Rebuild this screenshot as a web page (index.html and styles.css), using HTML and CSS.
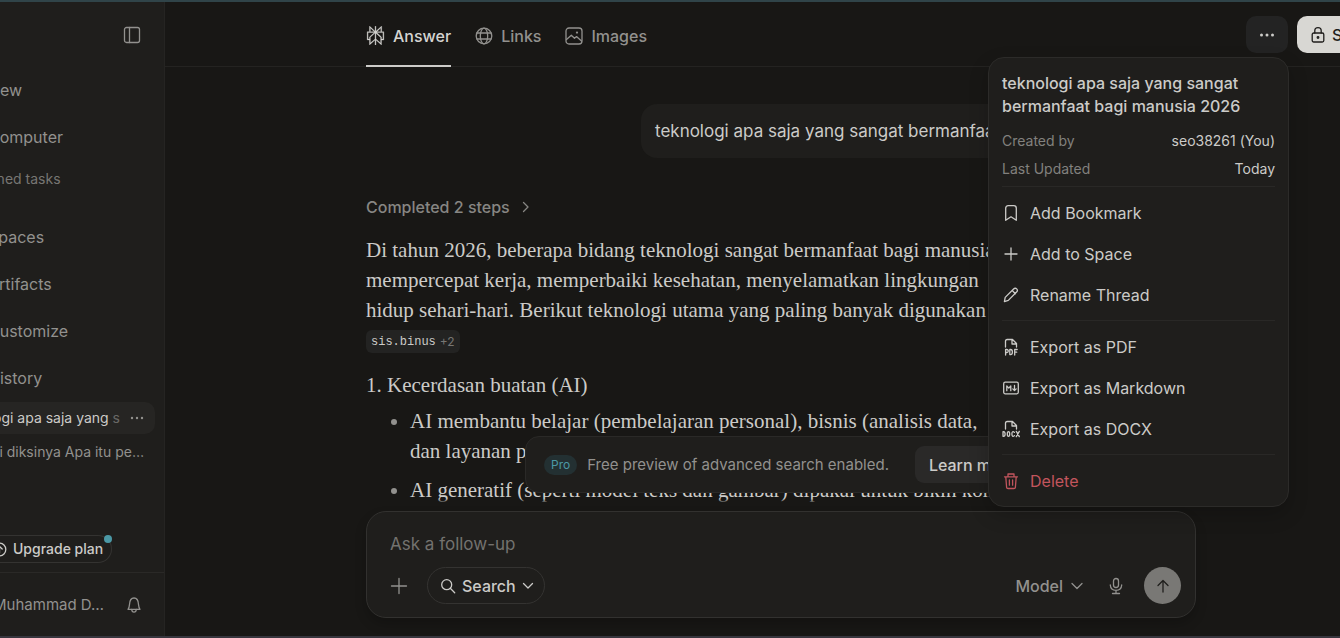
FILE: index.html
```html
<!DOCTYPE html>
<html lang="id">
<head>
<meta charset="utf-8">
<meta name="viewport" content="width=device-width, initial-scale=1">
<title>teknologi apa saja yang sangat bermanfaat bagi manusia 2026</title>
<link rel="stylesheet" href="styles.css">
</head>
<body>
<div class="app">
  <aside class="sidebar">
    <div class="sidebar-top">
      <button class="icon-button" aria-label="Toggle sidebar">
        <svg class="icon" width="18" height="18" viewBox="0 0 18 18"><rect x="1.5" y="1.5" width="15" height="15" rx="2"/><path d="M6.500 1.500v15"/></svg>
      </button>
    </div>
    <nav class="nav">
      <a class="nav-link" href="#">New</a>
      <a class="nav-link" href="#">Computer</a>
      <a class="nav-sub" href="#">Pinned tasks</a>
      <a class="nav-link" href="#">Spaces</a>
      <a class="nav-link" href="#">Artifacts</a>
      <a class="nav-link" href="#">Customize</a>
      <a class="nav-link" href="#">History</a>
    </nav>
    <div class="recent">
      <div class="recent-row recent-active">
        <a class="recent-link" href="#">teknologi apa saja yang <span class="faded">s</span></a>
        <button class="icon-button recent-more" aria-label="Thread options">
          <svg class="dots" width="14" height="4" viewBox="0 0 14 4"><circle cx="2" cy="2" r="1.2"/><circle cx="7" cy="2" r="1.2"/><circle cx="12" cy="2" r="1.2"/></svg>
        </button>
      </div>
      <div class="recent-row"><a class="recent-link" href="#">Perbaiki diksinya Apa itu pe…</a></div>
    </div>
    <div class="upgrade">
      <button class="upgrade-button">
        <svg class="icon" width="15" height="15" viewBox="0 0 15 15"><circle cx="7.5" cy="7.5" r="6.300"/><path d="M7.500 11V4.500M4.800 7l2.700-2.700L10.200 7"/></svg>
        Upgrade plan
      </button>
      <span class="upgrade-dot"></span>
    </div>
    <div class="account">
      <a class="account-name" href="#">Muhammad D…</a>
      <button class="icon-button" aria-label="Notifications">
        <svg class="icon" width="16" height="18" viewBox="0 0 16 18"><path d="M2 13.300h12c-1-1.200-1.300-2.400-1.500-4.800C12.300 4.600 10.600 2 8 2S3.700 4.600 3.500 8.500C3.300 10.900 3 12.100 2 13.300z"/><path d="M5.700 13.500c.2 1.800 1.100 2.700 2.300 2.700s2.100-.9 2.300-2.700"/></svg>
      </button>
    </div>
  </aside>

  <main class="main">
    <header class="header">
      <nav class="tabs">
        <a class="tab tab-active" href="#">
          <svg class="logo" width="19" height="19" viewBox="0 0 24 24"><path d="M19.785 0v7.272H22.500V17.620h-2.935V24l-7.037-6.194v6.145h-1.091v-6.152L4.392 24v-6.465H1.500V7.188h2.884V0l7.053 6.494V.19h1.090v6.490L19.786 0zm-7.257 9.044v7.319l5.946 5.234V14.440l-5.946-5.397zm-1.099-.08l-5.946 5.398v7.235l5.946-5.234V8.965zm8.136 7.580h1.844V8.349H13.460l6.105 5.540v2.655zm-8.982-8.280H2.590v8.195h1.800v-2.576l6.192-5.620zM5.475 2.476v4.710h5.115l-5.115-4.710zm13.219 0l-5.115 4.710h5.115v-4.710z"/></svg>
          Answer
        </a>
        <a class="tab" href="#">
          <svg class="icon" width="18" height="18" viewBox="0 0 18 18"><circle cx="9" cy="9" r="7.800"/><ellipse cx="9" cy="9" rx="3.700" ry="7.800"/><path d="M2 6h14M2 12h14"/></svg>
          Links
        </a>
        <a class="tab" href="#">
          <svg class="icon" width="18" height="18" viewBox="0 0 18 18"><rect x="1" y="1" width="16" height="16" rx="3"/><path d="m1.500 12.500 4.800-4.200 3.200 3 2-1.700 5 4.400"/><circle cx="12" cy="5.600" r=".5"/></svg>
          Images
        </a>
      </nav>
      <div class="actions">
        <div class="menu-anchor">
          <button class="more-button" aria-label="More" aria-expanded="true">
            <svg class="dots" width="16" height="4" viewBox="0 0 16 4"><circle cx="2.500" cy="2" r="1.500"/><circle cx="8" cy="2" r="1.500"/><circle cx="13.500" cy="2" r="1.500"/></svg>
          </button>
          <div class="menu">
            <h2 class="menu-title">teknologi apa saja yang sangat bermanfaat bagi manusia 2026</h2>
            <dl class="meta">
              <div class="meta-row"><dt>Created by</dt><dd>seo38261 (You)</dd></div>
              <div class="meta-row"><dt>Last Updated</dt><dd>Today</dd></div>
            </dl>
            <div class="menu-group">
              <button class="menu-item"><svg class="icon" width="18" height="18" viewBox="0 0 18 18"><path d="M3.700 16.300V4.200c0-1.600.9-2.500 2.500-2.500h5.600c1.600 0 2.500.9 2.500 2.500v12.100L9 12.800z"/></svg>Add Bookmark</button>
              <button class="menu-item"><svg class="icon" width="18" height="18" viewBox="0 0 18 18"><path d="M9 3v12M3 9h12"/></svg>Add to Space</button>
              <button class="menu-item"><svg class="icon" width="18" height="18" viewBox="0 0 18 18"><path d="m2.400 15.600.8-4.200 8.400-8.400c1-1 2.200-1 3.100-.1s.9 2.100-.1 3.100L6.300 14.400zM10.200 4.500l3.200 3.200"/></svg>Rename Thread</button>
            </div>
            <div class="menu-group">
              <button class="menu-item"><svg class="icon" width="18" height="18" viewBox="0 0 18 18"><path d="M3.500 9V3.200c0-1.100.5-1.700 1.700-1.700h5.300l4 4V9M10 1.800V6h4.200"/><path d="M3.600 17v-5.500h1.200a1.500 1.500 0 0 1 0 3H3.600M7.800 11.500h.8c1.200 0 1.800.9 1.800 2.500s-.6 2.600-1.800 2.600h-.8zM12.700 17v-5.500h2.500M12.700 14.200h2"/></svg>Export as PDF</button>
              <button class="menu-item"><svg class="icon" width="18" height="18" viewBox="0 0 18 18"><rect x="1.700" y="3.200" width="14.600" height="11.600" rx="1.500"/><path d="M4.800 11.700V6.900l2 2.200 2-2.200v4.800M12.500 6.500v5M10.800 9.900l1.700 1.700 1.700-1.700"/></svg>Export as Markdown</button>
              <button class="menu-item"><svg class="icon" width="18" height="18" viewBox="0 0 18 18"><path d="M3.500 9V3.200c0-1.100.5-1.700 1.700-1.700h5.300l4 4V9M10 1.800V6h4.200"/><path d="M1 11.700h.6c1 0 1.500.8 1.500 2.300s-.5 2.300-1.500 2.300H1zM6.500 11.600c-.8 0-1.200.8-1.200 2.400s.4 2.400 1.200 2.400 1.200-.8 1.200-2.400-.4-2.400-1.200-2.400zM12.400 12.400c-1.400-1.500-2.500-.6-2.500 1.600s1.100 3.100 2.500 1.600M14.300 11.400l3 5.200M17.300 11.400l-3 5.200"/></svg>Export as DOCX</button>
            </div>
            <div class="menu-group">
              <button class="menu-item menu-danger"><svg class="icon" width="18" height="18" viewBox="0 0 18 18"><path d="M2.500 4.800h13M6 4.500V2h6v2.500M3.800 5l.8 10.300c.1.800.6 1.200 1.400 1.200h6c.8 0 1.300-.4 1.400-1.200L14.200 5M7.400 8v5.200M10.600 8v5.200"/></svg>Delete</button>
            </div>
          </div>
        </div>
        <button class="share-button">
          <svg class="icon" width="14" height="18" viewBox="0 0 14 18"><rect x="1.200" y="7" width="11.600" height="9" rx="1.500"/><path d="M3.800 7V4.800C3.800 2.900 5 1.700 7 1.700s3.200 1.200 3.200 3.100V7"/><circle cx="7" cy="11.500" r=".8"/></svg>
          Share
        </button>
      </div>
    </header>

    <section class="thread">
      <div class="question">teknologi apa saja yang sangat bermanfaat bagi manusia 2026</div>
      <button class="steps">Completed 2 steps
        <svg class="icon" width="8" height="12" viewBox="0 0 8 12"><path d="m1.500 1.500 4.500 4.500-4.500 4.500"/></svg>
      </button>
      <article class="answer">
        <p class="answer-text">Di tahun 2026, beberapa bidang teknologi sangat bermanfaat bagi manusia<br>mempercepat kerja, memperbaiki kesehatan, menyelamatkan lingkungan<br>hidup sehari-hari. Berikut teknologi utama yang paling banyak digunakan</p>
        <a class="source" href="#">sis.binus <span class="source-count">+2</span></a>
        <h3 class="answer-heading">1. Kecerdasan buatan (AI)</h3>
        <ul class="answer-list">
          <li>AI membantu belajar (pembelajaran personal), bisnis (analisis data,<br>dan layanan publik</li>
          <li>AI generatif (seperti model teks dan gambar) dipakai untuk bikin konten</li>
        </ul>
      </article>
    </section>

    <div class="dock">
      <div class="banner">
        <span class="badge">Pro</span>
        <span class="banner-text">Free preview of advanced search enabled.</span>
        <button class="banner-button">Learn more</button>
      </div>
      <form class="composer">
        <input class="composer-input" type="text" placeholder="Ask a follow-up" aria-label="Ask a follow-up">
        <div class="composer-row">
          <button type="button" class="icon-button attach" aria-label="Add">
            <svg class="icon" width="18" height="18" viewBox="0 0 18 18"><path d="M9 1.500v15M1.500 9h15"/></svg>
          </button>
          <button type="button" class="search-button">
            <svg class="icon" width="16" height="16" viewBox="0 0 16 16"><circle cx="6.700" cy="6.700" r="5"/><path d="m10.300 10.300 4.400 4.400"/></svg>
            Search
            <svg class="icon" width="12" height="8" viewBox="0 0 12 8"><path d="M1.500 1.500 6 6l4.500-4.500"/></svg>
          </button>
          <button type="button" class="model-button">Model
            <svg class="icon" width="12" height="8" viewBox="0 0 12 8"><path d="M1 1.500l5 5 5-5"/></svg>
          </button>
          <button type="button" class="icon-button" aria-label="Dictate">
            <svg class="icon" width="16" height="18" viewBox="0 0 16 18"><rect x="5.500" y="1.500" width="5" height="9" rx="2.500"/><path d="M2.300 8c.2 3.200 2.300 5.300 5.700 5.300s5.500-2.100 5.700-5.300M8 13.300v3M4.500 16.500h7"/></svg>
          </button>
          <button type="submit" class="send-button" aria-label="Submit">
            <svg class="icon" width="16" height="16" viewBox="0 0 16 16"><path d="M8 14V2.500M3 7.500l5-5 5 5"/></svg>
          </button>
        </div>
      </form>
    </div>
  </main>
</div>
</body>
</html>
```
FILE: styles.css
```css
* { box-sizing: border-box; }

body {
  margin: 0;
  overflow: hidden;
  background: #181715;
  color: #cccbc8;
  font: 16px/24px Inter, "Liberation Sans", sans-serif;
}

a { color: inherit; text-decoration: none; }

button {
  padding: 0;
  border: 0;
  background: none;
  color: inherit;
  font: inherit;
  white-space: nowrap;
}

.icon {
  flex: none;
  fill: none;
  stroke: currentColor;
  stroke-width: 1.3;
  stroke-linecap: round;
  stroke-linejoin: round;
}

.dots, .logo { flex: none; fill: currentColor; }
.logo { stroke: currentColor; stroke-width: 0.4; }

.app {
  display: grid;
  grid-template-columns: 165px minmax(0, 1fr);
  height: 100vh;
  border-top: 2px solid #304449;
  border-bottom: 2px solid #37363e;
}

/* Sidebar */
.sidebar {
  display: flex;
  flex-direction: column;
  min-height: 0;
  overflow: hidden;
  border-right: 1px solid #252422;
  background: #1f1e1c;
  color: #92918e;
}

.sidebar-top {
  display: flex;
  align-items: center;
  justify-content: flex-end;
  height: 65px;
  padding-right: 23px;
}

.icon-button { display: flex; align-items: center; justify-content: center; }

.nav { display: flex; flex-direction: column; margin-left: -12px; }
.nav-link { line-height: 47px; }
.nav-sub {
  margin: 0 0 18px -12px;
  color: #777673;
  font-size: 14px;
  line-height: 35px;
}

.recent { display: flex; flex-direction: column; gap: 2px; font-size: 14px; }
.recent-row {
  display: flex;
  align-items: center;
  justify-content: flex-end;
  height: 32px;
  margin-right: 9px;
  padding-right: 11px;
  border-radius: 0 10px 10px 0;
  white-space: nowrap;
}
.recent-active { gap: 10px; background: #262523; color: #cccbc8; }
.faded { opacity: 0.4; }
.recent-more { color: #92918e; }

.upgrade { position: relative; align-self: flex-start; margin: auto 0 9px -8px; }
.upgrade-button {
  display: flex;
  align-items: center;
  gap: 6px;
  height: 28px;
  padding: 0 8px 0 0;
  border: 1px solid #343331;
  border-left: 0;
  border-radius: 0 14px 14px 0;
  color: #cccbc8;
  font-size: 14px;
  font-weight: 500;
}
.upgrade-dot {
  position: absolute;
  top: 0;
  right: 0;
  width: 8px;
  height: 8px;
  border-radius: 50%;
  background: #4b98a5;
}

.account {
  display: flex;
  align-items: center;
  justify-content: flex-end;
  gap: 22px;
  height: 64px;
  padding-right: 22px;
  border-top: 1px solid #2a2927;
  font-size: 15px;
  white-space: nowrap;
}

/* Header */
.main { position: relative; display: flex; flex-direction: column; min-height: 0; }

.header {
  display: flex;
  flex: none;
  justify-content: space-between;
  height: 65px;
  padding-left: 201px;
  border-bottom: 1px solid #242321;
}

.tabs { display: flex; gap: 24px; }
.tab {
  display: flex;
  align-items: center;
  gap: 8px;
  height: 65px;
  padding-top: 4px;
  border-bottom: 2px solid transparent;
  color: #92918e;
  font-weight: 500;
}
.tab-active { border-color: #cccbc8; color: #d5d4d1; }

.actions { display: flex; gap: 9px; margin: 14px -52px 0 0; }
.menu-anchor { position: relative; }
.more-button, .share-button {
  display: flex;
  align-items: center;
  height: 37px;
  border-radius: 10px;
}
.more-button { justify-content: center; width: 42px; background: #232323; }
.share-button {
  gap: 7px;
  width: 95px;
  padding-left: 14px;
  background: #d8d7d3;
  color: #1f1e1c;
  font-weight: 500;
}

/* Thread menu */
.menu {
  position: absolute;
  z-index: 3;
  top: 41px;
  right: -1px;
  width: 301px;
  padding: 14px 13px 0;
  border: 1px solid #2c2b29;
  border-radius: 16px;
  background: #1f1e1c;
  box-shadow: 0 8px 20px rgba(0, 0, 0, 0.2);
}
.menu-title { margin: 0 0 9px; font-size: 16px; font-weight: 500; line-height: 23px; }
.meta { margin: 0 0 3px; font-size: 14px; line-height: 28px; }
.meta-row { display: flex; justify-content: space-between; }
.meta dt { color: #82817e; }
.meta dd { margin: 0; }
.menu-group { padding: 5px 0; border-top: 1px solid #292826; }
.menu-item {
  display: flex;
  align-items: center;
  gap: 10px;
  width: 100%;
  height: 41px;
}
.menu-danger { color: #c2555d; }

/* Thread */
.thread {
  display: flex;
  flex: 1;
  flex-direction: column;
  align-items: flex-start;
  width: 100%;
  max-width: 1031px;
  min-height: 0;
  padding: 37px 0 0 201px;
  overflow: hidden;
}
.question {
  flex: none;
  align-self: flex-end;
  width: 555px;
  padding: 15px 14px;
  border-radius: 16px;
  background: #1f1e1c;
  font-size: 17px;
  white-space: nowrap;
}
.steps {
  display: flex;
  align-items: center;
  gap: 12px;
  margin: 37px 0 16px;
  color: #878683;
  font-weight: 500;
}
.answer {
  font: 21px/30px "Liberation Serif", serif;
  white-space: nowrap;
}
.answer-text { margin: 0 0 5px; }
.source {
  display: flex;
  align-items: center;
  gap: 4px;
  width: fit-content;
  height: 23px;
  padding: 0 5px;
  border-radius: 6px;
  background: #232322;
  font: 12px/16px "Liberation Mono", monospace;
}
.source-count { color: #777673; font-family: Inter, sans-serif; }
.answer-heading { margin: 17px 0 6px; font-size: 21px; font-weight: 400; }
.answer-list {
  display: flex;
  flex-direction: column;
  gap: 9px;
  margin: 0;
  padding-left: 44px;
}
.answer-list li::marker { color: #92918e; }

/* Dock */
.dock {
  position: absolute;
  z-index: 2;
  bottom: 0;
  left: 201px;
  display: flex;
  flex-direction: column;
  align-items: center;
  width: calc(100% - 201px);
  max-width: 830px;
  padding-bottom: 18px;
}
/* Fades the thread out between the banner and the composer */
.dock::before {
  content: "";
  order: 1;
  width: 100%;
  height: 18px;
  background: linear-gradient(transparent 30%, #181715 60%);
}
.banner {
  display: flex;
  align-items: center;
  width: 512px;
  height: 57px;
  padding: 0 6px 0 18px;
  border: 1px solid #2a2927;
  border-radius: 14px;
  background: #1f1e1c;
  color: #92918e;
  white-space: nowrap;
}
.badge {
  margin-right: 10px;
  padding: 0 7px;
  border-radius: 10px;
  background: #233032;
  color: #4b98a5;
  font-size: 12px;
  line-height: 20px;
}
.banner-text { font-size: 15px; }
.banner-button {
  height: 37px;
  margin-left: auto;
  padding: 0 14px;
  border-radius: 9px;
  background: #2a2928;
  color: #cccbc8;
  font-weight: 500;
}
.composer {
  order: 2;
  width: 100%;
  margin: 0;
  padding: 17px 14px 13px 23px;
  border: 1px solid #32312f;
  border-radius: 20px;
  background: #1f1e1c;
  box-shadow: 0 6px 12px rgba(0, 0, 0, 0.2);
}
.composer-input {
  display: block;
  width: 100%;
  height: 30px;
  margin-bottom: 8px;
  padding: 0;
  border: 0;
  outline: 0;
  background: none;
  color: #cccbc8;
  font: 17px/30px Inter, sans-serif;
}
.composer-input::placeholder { color: #73726f; opacity: 1; }
.composer-row { display: flex; align-items: center; color: #92918e; }
.attach { margin-right: 19px; }
.search-button {
  display: flex;
  align-items: center;
  gap: 6px;
  height: 37px;
  padding: 0 10px 0 12px;
  border: 1px solid #343331;
  border-radius: 19px;
  color: #cccbc8;
  font-weight: 500;
}
.model-button {
  display: flex;
  align-items: center;
  gap: 8px;
  margin: 0 25px 0 auto;
  font-weight: 500;
}
.send-button {
  display: flex;
  align-items: center;
  justify-content: center;
  width: 37px;
  height: 37px;
  margin-left: 20px;
  border-radius: 50%;
  background: #797875;
  color: #1f1e1c;
}
```
